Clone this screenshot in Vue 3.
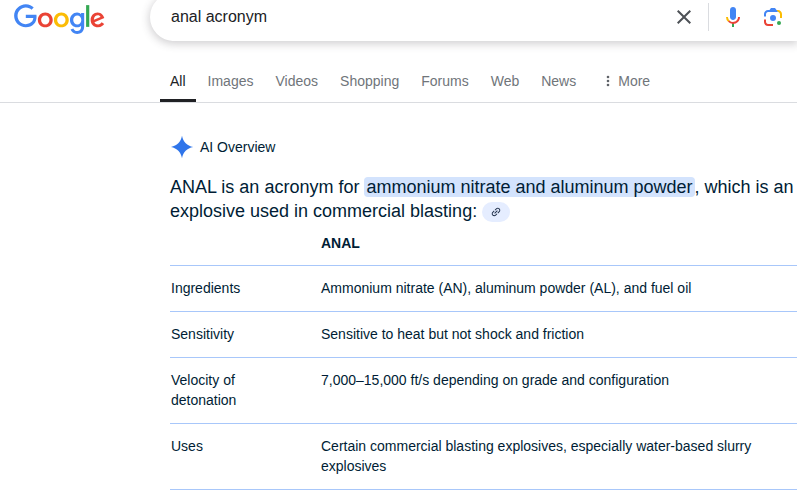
<script setup>
import { ref } from 'vue'

const query = ref('anal acronym')
const tabs = ['All', 'Images', 'Videos', 'Shopping', 'Forums', 'Web', 'News']
const active = ref('All')
const rows = [
  { label: 'Ingredients', value: 'Ammonium nitrate (AN), aluminum powder (AL), and fuel oil' },
  { label: 'Sensitivity', value: 'Sensitive to heat but not shock and friction' },
  { label: 'Velocity of detonation', value: '7,000–15,000 ft/s depending on grade and configuration' },
  { label: 'Uses', value: 'Certain commercial blasting explosives, especially water-based slurry explosives' }
]
</script>

<template>
  <div class="page">
    <header class="top">
      <a class="logo" href="#" aria-label="Google">
        <svg viewBox="0 0 272 92" width="91" height="31">
          <path fill="#EA4335" d="M115.75 47.18c0 12.77-9.99 22.18-22.25 22.18s-22.25-9.41-22.25-22.18C71.25 34.32 81.24 25 93.5 25s22.25 9.32 22.25 22.18zm-9.74 0c0-7.98-5.79-13.44-12.51-13.44S80.99 39.2 80.99 47.18c0 7.9 5.79 13.44 12.51 13.44s12.51-5.55 12.51-13.44z" />
          <path fill="#FBBC05" d="M163.75 47.18c0 12.77-9.99 22.18-22.25 22.18s-22.25-9.41-22.25-22.18c0-12.85 9.99-22.18 22.25-22.18s22.25 9.32 22.25 22.18zm-9.74 0c0-7.98-5.79-13.44-12.51-13.44s-12.51 5.46-12.51 13.44c0 7.9 5.79 13.44 12.51 13.44s12.51-5.55 12.51-13.44z" />
          <path fill="#4285F4" d="M209.75 26.34v39.82c0 16.38-9.66 23.07-21.08 23.07-10.75 0-17.22-7.19-19.66-13.07l8.48-3.53c1.51 3.61 5.21 7.87 11.17 7.87 7.31 0 11.84-4.51 11.84-13v-3.19h-.34c-2.18 2.69-6.38 5.04-11.68 5.04-11.09 0-21.25-9.66-21.25-22.09 0-12.52 10.16-22.26 21.25-22.26 5.29 0 9.49 2.35 11.68 4.96h.34v-3.61h9.25zm-8.56 20.92c0-7.81-5.21-13.52-11.84-13.52-6.72 0-12.35 5.71-12.35 13.52 0 7.73 5.63 13.36 12.35 13.36 6.63 0 11.84-5.63 11.84-13.36z" />
          <path fill="#34A853" d="M225 3v65h-9.5V3h9.5z" />
          <path fill="#EA4335" d="M262.02 54.48l7.56 5.04c-2.44 3.61-8.32 9.83-18.48 9.83-12.6 0-22.01-9.74-22.01-22.18 0-13.19 9.49-22.18 20.92-22.18 11.51 0 17.14 9.16 18.98 14.11l1.01 2.52-29.65 12.28c2.27 4.45 5.8 6.72 10.75 6.72 4.96 0 8.4-2.44 10.92-6.14zm-23.27-7.98l19.82-8.23c-1.09-2.77-4.37-4.7-8.23-4.7-4.95 0-11.84 4.37-11.59 12.93z" />
          <path fill="#4285F4" d="M35.29 41.41V32H67c.31 1.64.47 3.58.47 5.68 0 7.06-1.93 15.79-8.15 22.01-6.05 6.3-13.78 9.66-24.02 9.66C16.32 69.35.36 53.89.36 34.91.36 15.93 16.32.47 35.3.47c10.5 0 17.98 4.12 23.6 9.49l-6.64 6.64c-4.03-3.78-9.49-6.72-16.97-6.72-13.86 0-24.7 11.17-24.7 25.03 0 13.86 10.84 25.03 24.7 25.03 8.99 0 14.11-3.61 17.39-6.89 2.66-2.66 4.41-6.46 5.1-11.65l-22.49.01z" />
        </svg>
      </a>
      <form class="search" @submit.prevent>
        <input v-model="query" class="query" type="text" aria-label="Search" />
        <button class="icon" type="button" aria-label="Clear" @click="query = ''">
          <svg viewBox="0 0 24 24" width="24" height="24"><path fill="#4d5156" d="M19 6.41L17.59 5 12 10.59 6.41 5 5 6.41 10.59 12 5 17.59 6.41 19 12 13.41 17.59 19 19 17.59 13.41 12z" /></svg>
        </button>
        <span class="divider"></span>
        <button class="icon" type="button" aria-label="Search by voice">
          <svg viewBox="0 0 24 24" width="24" height="24">
            <path fill="#4285F4" d="M12 15c1.66 0 3-1.31 3-2.97V4.98C15 3.34 13.66 2 12 2S9 3.34 9 4.98v7.05C9 13.69 10.34 15 12 15z" />
            <path fill="#34A853" d="M11 18.08h2V22h-2z" />
            <path fill="#FBBC04" d="M7.05 16.87A6.9 6.9 0 0 1 5 12h2c0 1.45.56 2.42 1.47 3.38v.32l-1.15 1.18z" />
            <path fill="#EA4335" d="M12 16.93a4.97 4.97 0 0 1-3.54-1.55l-1.41 1.49A6.97 6.97 0 0 0 12 18.93c3.87 0 6.99-2.92 6.99-6.93H17c0 2.92-2.24 4.93-5 4.93z" />
          </svg>
        </button>
        <button class="icon" type="button" aria-label="Search by image">
          <svg viewBox="0 0 192 192" width="24" height="24">
            <circle fill="#34A853" cx="144.07" cy="144" r="16" />
            <circle fill="#4285F4" cx="96.07" cy="104" r="24" />
            <path fill="#EA4335" d="M24 135.2c0 18.11 14.69 32.8 32.8 32.8H96v-16l-40.1-.1c-8.8 0-15.9-8.19-15.9-17.9v-18H24v19.2z" />
            <path fill="#FBBC04" d="M168 72.8c0-18.11-14.69-32.8-32.8-32.8H116l20 16c8.8 0 16 8.29 16 18v30h16V72.8z" />
            <path fill="#4285F4" d="M112 24H80L68 40H56.8C38.69 40 24 54.69 24 72.8V92h16V74c0-9.71 7.2-18 16-18h80l-24-32z" />
          </svg>
        </button>
      </form>
    </header>

    <nav class="tabs">
      <a v-for="tab in tabs" :key="tab" href="#" class="tab" :class="{ active: tab === active }" @click.prevent="active = tab">{{ tab }}</a>
      <button class="tab more" type="button">
        <svg viewBox="0 0 4 12" width="4" height="12" fill="#5f6368"><circle cx="2" cy="2" r="1.3" /><circle cx="2" cy="6" r="1.3" /><circle cx="2" cy="10" r="1.3" /></svg>
        <span>More</span>
      </button>
    </nav>

    <main class="overview">
      <div class="title">
        <svg viewBox="0 0 24 24" width="24" height="24"><path fill="#2f75ea" d="M12 .8C13.2 7 17 10.800 23.200 12 17 13.200 13.200 17 12 23.200 10.800 17 7 13.200.8 12 7 10.800 10.800 7 12 .8z" /></svg>
        <span>AI Overview</span>
      </div>
      <p class="summary">ANAL is an acronym for <mark>ammonium nitrate and aluminum powder</mark>, which is an explosive used in commercial blasting:
        <button class="cite" type="button" aria-label="View source">
          <svg viewBox="0 0 24 24" width="12" height="12"><path transform="rotate(-45 12 12)" fill="#1f2f4a" d="M3.9 12c0-1.71 1.39-3.1 3.1-3.1h4V7H7c-2.76 0-5 2.24-5 5s2.24 5 5 5h4v-1.9H7c-1.71 0-3.1-1.39-3.1-3.1zM8 13h8v-2H8v2zm9-6h-4v1.9h4c1.71 0 3.1 1.39 3.1 3.1s-1.39 3.1-3.1 3.1h-4V17h4c2.76 0 5-2.24 5-5s-2.240-5-5-5z" /></svg>
        </button>
      </p>
      <table class="facts">
        <thead>
          <tr><td></td><th scope="col">ANAL</th></tr>
        </thead>
        <tbody>
          <tr v-for="row in rows" :key="row.label">
            <th scope="row">{{ row.label }}</th>
            <td>{{ row.value }}</td>
          </tr>
        </tbody>
      </table>
    </main>
  </div>
</template>

<style>
body {
  margin: 0;
  background: #fff;
}
</style>

<style scoped>
.page {
  font-family: "Liberation Sans", Arial, sans-serif;
  font-size: 14px;
  line-height: 20px;
  color: #001d35;
  overflow: hidden;
}
button {
  border: 0;
  padding: 0;
  background: none;
  font: inherit;
  color: inherit;
  cursor: pointer;
}
svg {
  display: block;
}
.top {
  display: flex;
  align-items: center;
  gap: 45px;
  padding-left: 14px;
  margin-top: -7px;
}
.logo {
  flex: none;
  padding-top: 4px;
}
.search {
  flex: 1;
  display: flex;
  align-items: center;
  height: 48px;
  padding: 0 12px 0 21px;
  border-radius: 24px 0 0 24px;
  background: #fff;
  box-shadow: 0 2px 8px 1px rgba(64, 60, 67, 0.24);
}
.query {
  flex: 1;
  min-width: 0;
  border: 0;
  padding: 0;
  outline: 0;
  background: none;
  font: 16px/24px "Liberation Sans", Arial, sans-serif;
  color: #202124;
}
.icon {
  flex: none;
}
.icon + .icon {
  margin-left: 16px;
}
.divider {
  width: 1px;
  height: 28px;
  margin: 0 12px;
  background: #dadce0;
}
.tabs {
  display: flex;
  gap: 2px;
  margin-top: 19px;
  padding-left: 160px;
  border-bottom: 1px solid #dadce0;
}
.tab {
  padding: 11px 10px 8px;
  border-bottom: 3px solid transparent;
  color: #70757a;
  text-decoration: none;
  white-space: nowrap;
}
.tab.active {
  color: #202124;
  border-color: #202124;
}
.more {
  display: flex;
  align-items: center;
  gap: 8px;
  margin-left: 8px;
}
.overview {
  padding: 32px 0 0 170px;
}
.title {
  display: flex;
  align-items: center;
  gap: 6px;
}
.summary {
  margin: 16px 0 0;
  font-size: 18px;
  line-height: 24px;
}
mark {
  padding: 0 2px;
  border-radius: 4px;
  background: #d3e3fd;
  color: inherit;
}
.cite {
  display: inline-flex;
  align-items: center;
  justify-content: center;
  width: 28px;
  height: 20px;
  border-radius: 10px;
  background: #e5edff;
  vertical-align: middle;
}
.facts {
  width: 100%;
  border-collapse: collapse;
}
.facts th,
.facts td {
  padding: 12px 1px 13px;
  border-bottom: 1px solid #a8c7fa;
  text-align: left;
  vertical-align: top;
}
.facts thead th,
.facts thead td {
  padding-top: 10px;
  padding-bottom: 12px;
}
.facts tbody th {
  width: 100px;
  padding-right: 49px;
  font-weight: 400;
}
.facts td:last-child {
  padding-right: 36px;
}
</style>
